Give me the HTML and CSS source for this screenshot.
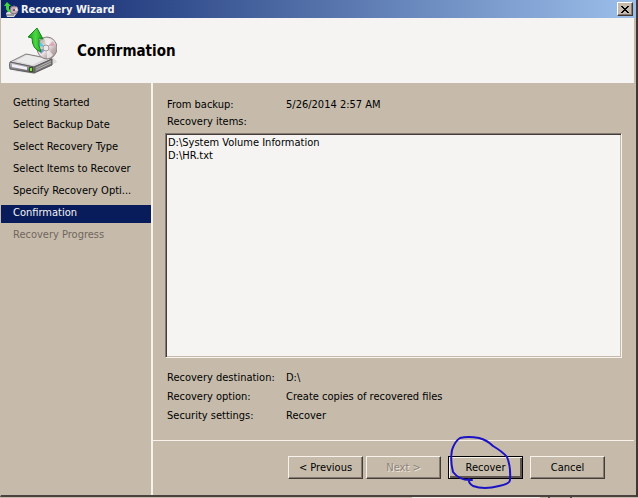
FILE: index.html
```html
<!doctype html>
<html lang="en">
    <head>
        <meta charset="UTF-8" />
        <meta name="viewport" content="width=device-width, initial-scale=1.0" />
        <title>Recovery Wizard</title>
        <link rel="stylesheet" href="styles.css">
    </head>
    <body>
        <div class="window">
            <div class="titlebar">
                <svg class="title-icon" viewBox="0 0 15 16" aria-hidden="true">
                    <path d="M2 12l3-2h7l1 2-3 4H3z" fill="#d9dbd8" />
                    <path d="M3 13h7v2H3z" fill="#9c9c9c" />
                    <circle cx="10" cy="9" r="4" fill="#c7a9b4" stroke="#7d6f84" />
                    <path d="M10 9l3-3 1 4z" fill="#eadfe2" />
                    <circle cx="10" cy="9" r="1" fill="#4b3f58" />
                    <path d="M3 1l4 4H5v3l2 3H4L2 8V5H0z" fill="#3fd83c" />
                </svg>
                <span class="title-text">Recovery Wizard</span>
                <button class="close" type="button" aria-label="Close">
                    <svg viewBox="0 0 8 7" aria-hidden="true">
                        <path d="M0 0h2v1h1v1h2V1h1V0h2v1H7v1H6v1H5v1h1v1h1v1h1v1H6V6H5V5H3v1H2v1H0V6h1V5h1V4h1V3H2V2H1V1H0z" />
                    </svg>
                </button>
            </div>

            <header class="banner">
                <svg class="banner-icon" viewBox="0 0 48 48" aria-hidden="true">
                    <defs>
                        <linearGradient id="arrow" x1="0" y1="0" x2="1" y2="0">
                            <stop offset="0" stop-color="#149a18" />
                            <stop offset=".5" stop-color="#4fd640" />
                            <stop offset="1" stop-color="#13a01b" />
                        </linearGradient>
                        <linearGradient id="disc" x1="0" y1="0" x2="1" y2="1">
                            <stop offset="0" stop-color="#9fa9aa" />
                            <stop offset=".3" stop-color="#cfc6c0" />
                            <stop offset=".5" stop-color="#efebea" />
                            <stop offset=".7" stop-color="#bfadb0" />
                            <stop offset="1" stop-color="#978d88" />
                        </linearGradient>
                        <linearGradient id="front" x1="0" y1="0" x2="0" y2="1">
                            <stop offset="0" stop-color="#c9c7cd" />
                            <stop offset="1" stop-color="#5a585c" />
                        </linearGradient>
                    </defs>
                    <path d="M4 44l22 3 22-12-5-6-17 12z" fill="#dedbd9" />
                    <path d="M1 35L17 27l26 5-18 8z" fill="#d6d4d6" stroke="#807d7e" />
                    <path d="M7 34l11-6 18 4-13 6z" fill="#ecebeb" />
                    <path d="M25 40l18-8v6L25 46z" fill="#7b7879" stroke="#5b5859" />
                    <path d="M27 43l15-7M27 41l15-7" stroke="#b8b5b5" fill="none" />
                    <path d="M1 35l24 5v6L1 42q-1-4 0-7z" fill="url(#front)" stroke="#5f5d60" />
                    <path d="M3 37l15 3v3L3 40z" fill="#f0eff8" />
                    <path d="M20 40h4v5h-4z" fill="#36531f" />
                    <path d="M22 41v3" stroke="#7ee544" stroke-width="2" />
                    <ellipse cx="38" cy="21" rx="10" ry="11" fill="url(#disc)" stroke="#8a8382" />
                    <path d="M38 21l-3-10q4-1 7 2zM38 21l6 7q-3 4-6 3z" fill="#faf8f8" opacity=".7" />
                    <path d="M36 20l-6-1 1-4z" fill="#55c8e8" />
                    <path d="M37 22l-5 5-2-5z" fill="#8398cf" />
                    <path d="M39 19l5-5 2 5z" fill="#d9abb7" />
                    <circle cx="37" cy="21" r="3" fill="#eceaea" stroke="#9d999b" />
                    <path d="M28 1l6 11-4-1q-1 8 2 14-9-3-9-14l-4-1z" fill="url(#arrow)" stroke="#14851b" stroke-linejoin="round" />
                </svg>
                <h1>Confirmation</h1>
            </header>

            <div class="body">
                <nav class="steps" aria-label="Wizard steps">
                    <ul>
                        <li>Getting Started</li>
                        <li>Select Backup Date</li>
                        <li>Select Recovery Type</li>
                        <li>Select Items to Recover</li>
                        <li>Specify Recovery Opti...</li>
                        <li class="current" aria-current="step">Confirmation</li>
                        <li class="pending">Recovery Progress</li>
                    </ul>
                </nav>

                <main class="content">
                    <div class="page">
                        <dl class="details">
                            <dt>From backup:</dt>
                            <dd>5/26/2014 2:57 AM</dd>
                        </dl>
                        <label class="items-label" for="items">Recovery items:</label>
                        <textarea id="items" class="items" readonly>D:\System Volume Information
D:\HR.txt</textarea>
                        <dl class="details">
                            <dt>Recovery destination:</dt>
                            <dd>D:\</dd>
                            <dt>Recovery option:</dt>
                            <dd>Create copies of recovered files</dd>
                            <dt>Security settings:</dt>
                            <dd>Recover</dd>
                        </dl>
                    </div>

                    <div class="actions">
                        <div class="pair">
                            <button class="btn" type="button">&lt; Previous</button>
                            <button class="btn" type="button" disabled>Next &gt;</button>
                        </div>
                        <div class="marked">
                            <button class="btn default" type="button">Recover</button>
                            <svg class="pen" viewBox="0 0 64 54" aria-hidden="true">
                                <path d="M23 44Q11 45 4 36Q1 25 3 14Q6 5 11 2Q19 0 30 2Q38 4 44 10Q54 16 58 21Q62 31 61 44Q61 48 50 50Q35 54 24 50Q19 47 20 43" />
                            </svg>
                        </div>
                        <button class="btn" type="button">Cancel</button>
                    </div>
                </main>
            </div>
        </div>
        <div class="behind">
            <div class="behind-panel"></div>
            <div class="behind-tab"></div>
        </div>
    </body>
</html>
```

FILE: styles.css
```css
* {
    box-sizing: border-box;
}
body {
    margin: 0;
    height: 100vh;
    display: flex;
    flex-direction: column;
    overflow: hidden;
    background: #c6bbab;
    color: #000;
    font: 11px/13px "DejaVu Sans Condensed", "DejaVu Sans", sans-serif;
}
button,
textarea {
    font: inherit;
    color: inherit;
    border-radius: 0;
}
.window {
    flex: 1;
    min-height: 0;
    display: flex;
    flex-direction: column;
    background: #c6bbab;
    border-left: 1px solid #c6bbab;
    border-right: 2px solid #3f3735;
    border-bottom: 2px solid #4a423f;
}

.titlebar {
    display: flex;
    align-items: center;
    height: 18px;
    padding: 0 3px;
    background: linear-gradient(to right, #0c246a, #9cbfea);
    color: #f4f4f4;
    font-weight: bold;
}
.title-icon {
    width: 15px;
    height: 16px;
}
.title-text {
    flex: 1;
    margin-left: 2px;
}
.close {
    display: flex;
    align-items: center;
    justify-content: center;
    width: 16px;
    height: 14px;
    padding: 0;
    background: #c6bbab;
    border: 1px solid;
    border-color: #fff #3f3735 #3f3735 #fff;
    box-shadow: inset -1px -1px #857b71;
}
.close svg {
    width: 8px;
    height: 7px;
}

.banner {
    display: flex;
    align-items: center;
    gap: 20px;
    height: 65px;
    margin-right: 2px;
    padding-left: 8px;
    background: #f5f4f2;
}
.banner-icon {
    width: 48px;
    height: 48px;
}
.banner h1 {
    margin: 0;
    font-size: 15px;
    line-height: 18px;
}

.body {
    flex: 1;
    min-height: 0;
    display: flex;
}
.steps {
    width: 152px;
    border-right: 2px solid #f8f3ea;
}
.steps ul {
    display: flex;
    flex-direction: column;
    gap: 4px;
    margin: 0;
    padding: 12px 0 0;
    list-style: none;
}
.steps li {
    height: 18px;
    padding: 0 12px;
    line-height: 15px;
    white-space: nowrap;
}
.steps .current {
    background: #081c5c;
    color: #f4f4f4;
}
.steps .pending {
    color: #71665c;
}

.content {
    flex: 1;
    min-width: 0;
    display: flex;
    flex-direction: column;
}
.page {
    flex: 1;
    min-height: 0;
    display: flex;
    flex-direction: column;
    padding: 15px 14px 18px 12px;
}
.details {
    display: grid;
    grid-template-columns: 119px 1fr;
    row-gap: 6px;
    margin: 0;
    padding-left: 2px;
}
.details dd {
    margin: 0;
}
.items-label {
    margin-top: 4px;
    padding-left: 2px;
}
.items {
    flex: 1;
    width: 100%;
    margin: 5px 0 13px;
    padding: 2px;
    resize: none;
    outline: none;
    background: #f5f4f2;
    border: 1px solid;
    border-color: #857b71 #f8f3ea #f8f3ea #857b71;
    box-shadow: inset 1px 1px #443c38, inset -1px -1px #c6bbab;
}

.actions {
    display: flex;
    justify-content: flex-end;
    gap: 7px;
    margin-right: 2px;
    padding: 15px 29px 16px 0;
    border-top: 1px solid #f8f3ea;
}
.pair {
    display: flex;
    gap: 3px;
}
.btn {
    width: 75px;
    height: 23px;
    padding: 0;
    background: #c6bbab;
    border: 1px solid;
    border-color: #f8f3ea #443c38 #443c38 #f8f3ea;
    box-shadow: inset -1px -1px #857b71;
}
.btn:disabled {
    color: #8c8379;
    text-shadow: 1px 1px #eee7dc;
}
.btn.default {
    border-color: #000;
    box-shadow: inset 1px 1px #f8f3ea, inset -2px -2px #5f554e;
}

/* pen circle drawn over the Recover button */
.marked {
    position: relative;
}
.pen {
    position: absolute;
    left: 1px;
    top: -20px;
    width: 64px;
    height: 54px;
    overflow: visible;
    pointer-events: none;
}
.pen path {
    fill: none;
    stroke: #1a12c4;
    stroke-width: 2;
    stroke-linecap: round;
    stroke-linejoin: round;
}

/* edge of the window underneath */
.behind {
    display: flex;
    justify-content: flex-end;
    gap: 8px;
    height: 1px;
    padding-right: 66px;
}
.behind-panel {
    width: 128px;
    background: #eeeae4;
}
.behind-tab {
    width: 24px;
    background: #c6bbab;
    border-left: 2px solid #5a504c;
    border-right: 2px solid #5a504c;
}
```
